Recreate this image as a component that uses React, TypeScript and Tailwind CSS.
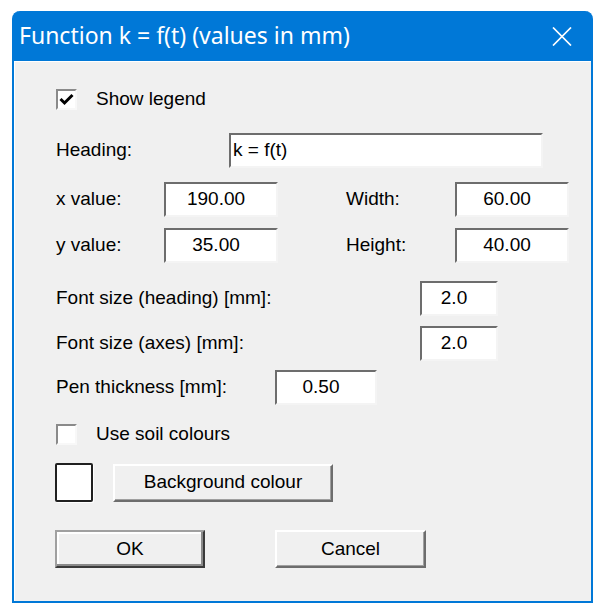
import React from 'react';

const sunken = "border-2 border-t-[#6d6d6d] border-l-[#6d6d6d] border-r-[#f4f4f4] border-b-[#f4f4f4] bg-white";

const Field = ({ value, w, align = 'center' }: { value: string; w: string; align?: 'center' | 'left' }) => (
  <div
    className={`${sunken} ${w} h-[35px] flex items-center ${align === 'center' ? 'justify-center pr-[10px]' : 'justify-start pl-[2px]'} text-[19px] text-black`}
  >
    {value}
  </div>
);

const CheckBox = ({ checked }: { checked: boolean }) => (
  <div className="w-[21px] h-[21px] border-2 border-t-[#8a8a8a] border-l-[#8a8a8a] border-r-[#f8f8f8] border-b-[#f8f8f8] bg-white flex items-center justify-center">
    {checked && (
      <svg width="15" height="13" viewBox="0 0 15 13">
        <path d="M1.5 6 L5.5 10 L13.5 2" stroke="#000" strokeWidth="3" fill="none" />
      </svg>
    )}
  </div>
);

const Button = ({ label, w, isDefault }: { label: string; w: string; isDefault?: boolean }) => (
  <div
    className={`${w} h-[38px] flex items-center justify-center bg-[#f0f0f0] text-[19px] text-black border-2 ${
      isDefault
        ? 'border-t-[#a0a0a0] border-l-[#a0a0a0] border-r-[#3a3a3a] border-b-[#3a3a3a] shadow-[inset_-2px_-2px_0_#8a8a8a,inset_2px_2px_0_#ffffff]'
        : 'border-t-[#ffffff] border-l-[#ffffff] border-r-[#6d6d6d] border-b-[#6d6d6d] shadow-[inset_-1px_-1px_0_#a0a0a0]'
    }`}
  >
    {label}
  </div>
);

export default function App() {
  return (
    <div className="w-[601px] h-[610px] bg-white pt-[11px] pl-[12px] font-['Liberation_Sans',Arial,sans-serif]">
      <div className="w-[581px] h-[592px] flex flex-col rounded-t-[8px] overflow-hidden border-x-2 border-b-2 border-[#0078d7] bg-[#0078d7]">
        {/* title bar */}
        <div className="h-[50px] flex items-center justify-between pl-[5px] pr-[19px] text-white">
          <span className="font-['Noto_Sans',sans-serif] text-[23px] leading-none pb-[2px]">Function k = f(t) (values in mm)</span>
          <svg width="20" height="19" viewBox="0 0 20 19">
            <path d="M1 0.5 L19 18.5 M19 0.5 L1 18.5" stroke="#fff" strokeWidth="1.7" />
          </svg>
        </div>

        {/* client area */}
        <div className="flex-1 bg-[#f0f0f0] border-t border-l border-white pl-[41px] text-[19px] text-black">
          <div className="mt-[27px] flex items-center h-[21px]">
            <CheckBox checked />
            <span className="ml-[19px]">Show legend</span>
          </div>

          <div className="mt-[23px] flex items-center">
            <span className="w-[173px]">Heading:</span>
            <Field value="k = f(t)" w="w-[314px]" align="left" />
          </div>

          <div className="mt-[14px] flex items-center">
            <span className="w-[108px]">x value:</span>
            <Field value="190.00" w="w-[114px]" />
            <span className="ml-[68px] w-[109px]">Width:</span>
            <Field value="60.00" w="w-[114px]" />
          </div>

          <div className="mt-[11px] flex items-center">
            <span className="w-[108px]">y value:</span>
            <Field value="35.00" w="w-[114px]" />
            <span className="ml-[68px] w-[109px]">Height:</span>
            <Field value="40.00" w="w-[114px]" />
          </div>

          <div className="mt-[18px] flex items-center">
            <span className="w-[364px]">Font size (heading) [mm]:</span>
            <Field value="2.0" w="w-[78px]" />
          </div>

          <div className="mt-[10px] flex items-center">
            <span className="w-[364px]">Font size (axes) [mm]:</span>
            <Field value="2.0" w="w-[78px]" />
          </div>

          <div className="mt-[9px] flex items-center">
            <span className="w-[219px]">Pen thickness [mm]:</span>
            <Field value="0.50" w="w-[102px]" />
          </div>

          <div className="mt-[19px] flex items-center h-[21px]">
            <CheckBox checked={false} />
            <span className="ml-[19px]">Use soil colours</span>
          </div>

          <div className="mt-[18px] flex items-center -ml-px">
            <div className="w-[38px] h-[39px] border-2 border-[#202020] bg-white rounded-[2px] shadow-[1px_1px_0_#ffffff]" />
            <div className="ml-[20px]">
              <Button label="Background colour" w="w-[220px]" />
            </div>
          </div>

          <div className="mt-[28px] flex items-center -ml-px">
            <Button label="OK" w="w-[150px]" isDefault />
            <div className="ml-[70px]">
              <Button label="Cancel" w="w-[151px]" />
            </div>
          </div>
        </div>
      </div>
    </div>
  );
}
